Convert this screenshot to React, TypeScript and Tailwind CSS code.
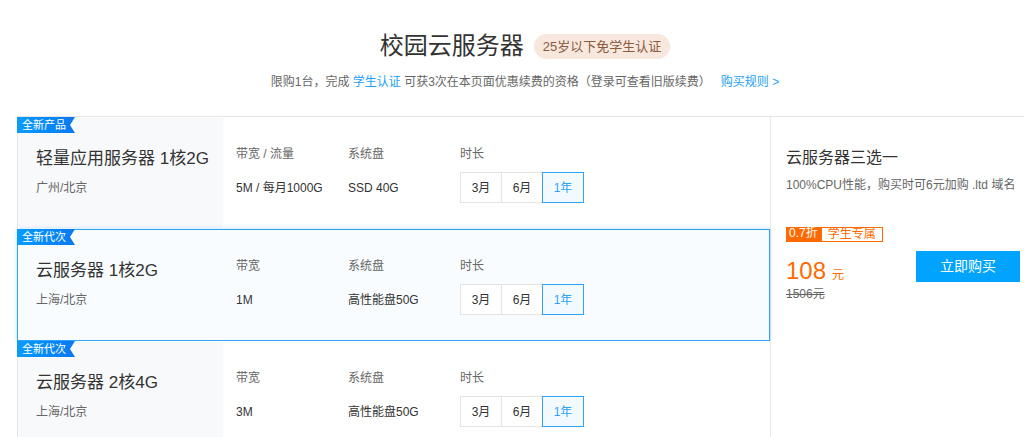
import React from 'react';

interface Plan {
    tag: string;
    name: string;
    region: string;
    bwLabel: string;
    bw: string;
    disk: string;
    selected?: boolean;
}

const plans: Plan[] = [
    { tag: '全新产品', name: '轻量应用服务器 1核2G', region: '广州/北京', bwLabel: '带宽 / 流量', bw: '5M / 每月1000G', disk: 'SSD 40G' },
    { tag: '全新代次', name: '云服务器 1核2G', region: '上海/北京', bwLabel: '带宽', bw: '1M', disk: '高性能盘50G', selected: true },
    { tag: '全新代次', name: '云服务器 2核4G', region: '上海/北京', bwLabel: '带宽', bw: '3M', disk: '高性能盘50G' },
];

const durations = ['3月', '6月', '1年'];

const Tag: React.FC<{ text: string }> = ({ text }) => (
    <div
        className="absolute left-[-1px] top-[-1px] z-10 h-[16px] w-[58px] bg-gradient-to-r from-[#0a9cff] to-[#0a78f0] pl-[5px] text-[11px] leading-[16px] text-white"
        style={{ clipPath: 'polygon(0 0, 100% 0, calc(100% - 5px) 50%, 100% 100%, 0 100%)' }}
    >
        {text}
    </div>
);

const PlanCard: React.FC<{ plan: Plan }> = ({ plan }) => (
    <div
        className={`relative flex h-[112px] border ${
            plan.selected
                ? 'border-[#2fa4f7] bg-[#f8fcff] shadow-[0_0_4px_rgba(47,164,247,0.35)]'
                : 'border-transparent border-l-[#e6e6e6] bg-white'
        }`}
    >
        <Tag text={plan.tag} />
        <div className={`w-[205px] shrink-0 pl-[18px] pt-[28px] ${plan.selected ? '' : 'bg-[#f8f9fb]'}`}>
            <div className="text-[17px] leading-[26px] text-[#333]">{plan.name}</div>
            <div className="mt-[8px] text-[12px] leading-[16px] text-[#666]">{plan.region}</div>
        </div>
        <div className="flex pl-[13px] pt-[28px]">
            <div className="w-[112px]">
                <div className="text-[12px] leading-[16px] text-[#666]">{plan.bwLabel}</div>
                <div className="mt-[18px] text-[12px] leading-[16px] text-[#333]">{plan.bw}</div>
            </div>
            <div className="w-[112px]">
                <div className="text-[12px] leading-[16px] text-[#666]">系统盘</div>
                <div className="mt-[18px] text-[12px] leading-[16px] text-[#333]">{plan.disk}</div>
            </div>
            <div>
                <div className="text-[12px] leading-[16px] text-[#666]">时长</div>
                <div className="mt-[10px] flex">
                    {durations.map((d, i) => {
                        const active = i === durations.length - 1;
                        return (
                            <div
                                key={d}
                                className={`-ml-px flex h-[31px] w-[42px] items-center justify-center border text-[12px] first:ml-0 ${
                                    active
                                        ? 'relative border-[#2fa4f7] bg-[#f2f9ff] text-[#2fa4f7]'
                                        : 'border-[#e3e3e3] bg-white text-[#333]'
                                }`}
                            >
                                {d}
                            </div>
                        );
                    })}
                </div>
            </div>
        </div>
    </div>
);

export default function App() {
    return (
        <div
            className="h-[437px] w-[1024px] overflow-hidden bg-white pl-[17px]"
            style={{ fontFamily: '"Liberation Sans", "Noto Sans CJK SC", sans-serif' }}
        >
            <div className="w-[1016px]">
                <div className="flex flex-col items-center pt-[30px]">
                    <div className="flex items-center gap-[10px]">
                        <h1 className="text-[24px] leading-[32px] text-[#333]">校园云服务器</h1>
                        <span className="rounded-full bg-[#f7e7dd] px-[9px] text-[13px] leading-[25px] text-[#8a5b40]">
                            25岁以下免学生认证
                        </span>
                    </div>
                    <p className="mt-[12px] text-[12px] leading-[16px] text-[#666]">
                        限购1台，完成 <span className="text-[#1ea0f5]">学生认证</span> 可获3次在本页面优惠续费的资格（登录可查看旧版续费）
                        <span className="ml-[10px] text-[#1ea0f5]">购买规则 &gt;</span>
                    </p>
                </div>

                <div className="mt-[26px] flex border-t border-[#e6e6e6]">
                    <div className="w-[753px] shrink-0">
                        {plans.map((p, i) => (
                            <PlanCard key={i} plan={p} />
                        ))}
                    </div>
                    <div className="flex-1 border-l border-[#e6e6e6] pl-[15px] pr-[13px] pt-[30px]">
                        <div className="text-[16px] leading-[22px] text-[#333]">云服务器三选一</div>
                        <div className="mt-[8px] text-[12px] leading-[16px] text-[#666]">
                            100%CPU性能，购买时可6元加购 .ltd 域名
                        </div>
                        <div className="mt-[34px] flex items-start justify-between">
                            <div>
                                <div className="flex h-[15px] text-[12px] leading-[13px]">
                                    <span className="bg-[#ff6a00] px-[3px] text-white">0.7折</span>
                                    <span className="border border-[#ff6a00] px-[6px] text-[#ff6a00]">学生专属</span>
                                </div>
                                <div className="mt-[15px] flex items-baseline text-[#ff6a00]">
                                    <span className="text-[24px] leading-[28px]">108</span>
                                    <span className="ml-[6px] text-[12px]">元</span>
                                </div>
                                <div className="mt-[1px] text-[12px] leading-[16px] text-[#666] line-through">1506元</div>
                            </div>
                            <button className="mt-[24px] h-[31px] w-[104px] bg-[#00a4ff] text-[14px] text-white">立即购买</button>
                        </div>
                    </div>
                </div>
            </div>
        </div>
    );
}
